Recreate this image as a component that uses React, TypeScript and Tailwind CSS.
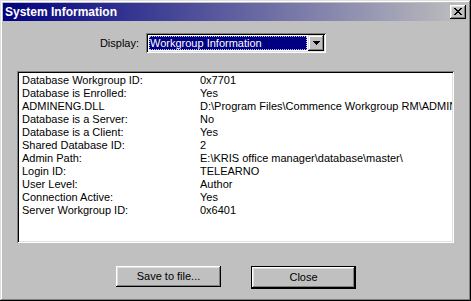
import React from "react";

const rows: [string, string][] = [
  ["Database Workgroup ID:", "0x7701"],
  ["Database is Enrolled:", "Yes"],
  ["ADMINENG.DLL", "D:\\Program Files\\Commence Workgroup RM\\ADMINENG.DLL"],
  ["Database is a Server:", "No"],
  ["Database is a Client:", "Yes"],
  ["Shared Database ID:", "2"],
  ["Admin Path:", "E:\\KRIS office manager\\database\\master\\"],
  ["Login ID:", "TELEARNO"],
  ["User Level:", "Author"],
  ["Connection Active:", "Yes"],
  ["Server Workgroup ID:", "0x6401"],
];

export default function App() {
  return (
    <div
      className="w-[471px] h-[301px] bg-[#c0c0c0] p-[3px] flex flex-col text-[11px] text-black shadow-[inset_-1px_-1px_0_#000,inset_1px_1px_0_#dfdfdf,inset_-2px_-2px_0_#808080,inset_2px_2px_0_#fff]"
      style={{ fontFamily: '"Liberation Sans", Arial, sans-serif' }}
    >
      {/* Title bar */}
      <div className="h-[18px] flex items-center justify-between pl-[2px] pr-[2px] bg-linear-to-r/srgb from-[#000080] to-[#c0c0c0]">
        <span className="text-white font-bold text-[12px] leading-none">System Information</span>
        <div className="w-[16px] h-[14px] bg-[#c0c0c0] flex items-center justify-center shadow-[inset_-1px_-1px_0_#000,inset_1px_1px_0_#fff,inset_-2px_-2px_0_#808080,inset_2px_2px_0_#dfdfdf]">
          <svg width="8" height="7" viewBox="0 0 8 7" className="-mt-px">
            <path d="M0 0h2v1h1v1h2V1h1V0h2v1H7v1H6v1H5v1h1v1h1v1h1v1H6V6H5V5H3v1H2v1H0V6h1V5h1V4h1V3H2V2H1V1H0z" fill="#000" />
          </svg>
        </div>
      </div>

      {/* Display row */}
      <div className="flex items-center mt-[12px]">
        <span className="w-[136px] text-right leading-none">Display:</span>
        <div className="ml-[7px] w-[180px] h-[20px] bg-white p-[2px] flex shadow-[inset_1px_1px_0_#808080,inset_-1px_-1px_0_#fff,inset_2px_2px_0_#000,inset_-2px_-2px_0_#dfdfdf]">
          <div className="flex-1 p-[1px] flex">
            <div className="flex-1 bg-[#000080] text-white flex items-center pl-[1px] leading-none outline-1 outline-dotted outline-[#c0c0ff] -outline-offset-1">
              Workgroup Information
            </div>
          </div>
          <div className="w-[16px] h-[16px] bg-[#c0c0c0] flex items-center justify-center shadow-[inset_-1px_-1px_0_#000,inset_1px_1px_0_#dfdfdf,inset_-2px_-2px_0_#808080,inset_2px_2px_0_#fff]">
            <svg width="7" height="4" viewBox="0 0 7 4">
              <path d="M0 0h7v1H6v1H5v1H4v1H3V3H2V2H1V1H0z" fill="#000" />
            </svg>
          </div>
        </div>
      </div>

      {/* List box */}
      <div className="mt-[18px] ml-[14px] w-[437px] h-[172px] bg-white p-[2px] shadow-[inset_1px_1px_0_#808080,inset_-1px_-1px_0_#fff,inset_2px_2px_0_#000,inset_-2px_-2px_0_#dfdfdf]">
        <div className="w-full h-full overflow-hidden pl-[3px] pt-px">
          {rows.map(([k, v]) => (
            <div key={k} className="flex h-[13px] leading-[13px] whitespace-nowrap">
              <span className="w-[178px] shrink-0">{k}</span>
              <span>{v}</span>
            </div>
          ))}
        </div>
      </div>

      {/* Buttons */}
      <div className="flex items-start mt-[23px] ml-[113px] gap-[30px]">
        <div className="w-[105px] h-[21px] bg-[#c0c0c0] flex items-center justify-center leading-none shadow-[inset_-1px_-1px_0_#000,inset_1px_1px_0_#fff,inset_-2px_-2px_0_#808080,inset_2px_2px_0_#dfdfdf]">
          Save to file...
        </div>
        <div className="w-[105px] h-[23px] border border-black bg-[#c0c0c0] flex items-center justify-center leading-none shadow-[inset_-1px_-1px_0_#000,inset_1px_1px_0_#fff,inset_-2px_-2px_0_#808080,inset_2px_2px_0_#dfdfdf]">
          Close
        </div>
      </div>
    </div>
  );
}
